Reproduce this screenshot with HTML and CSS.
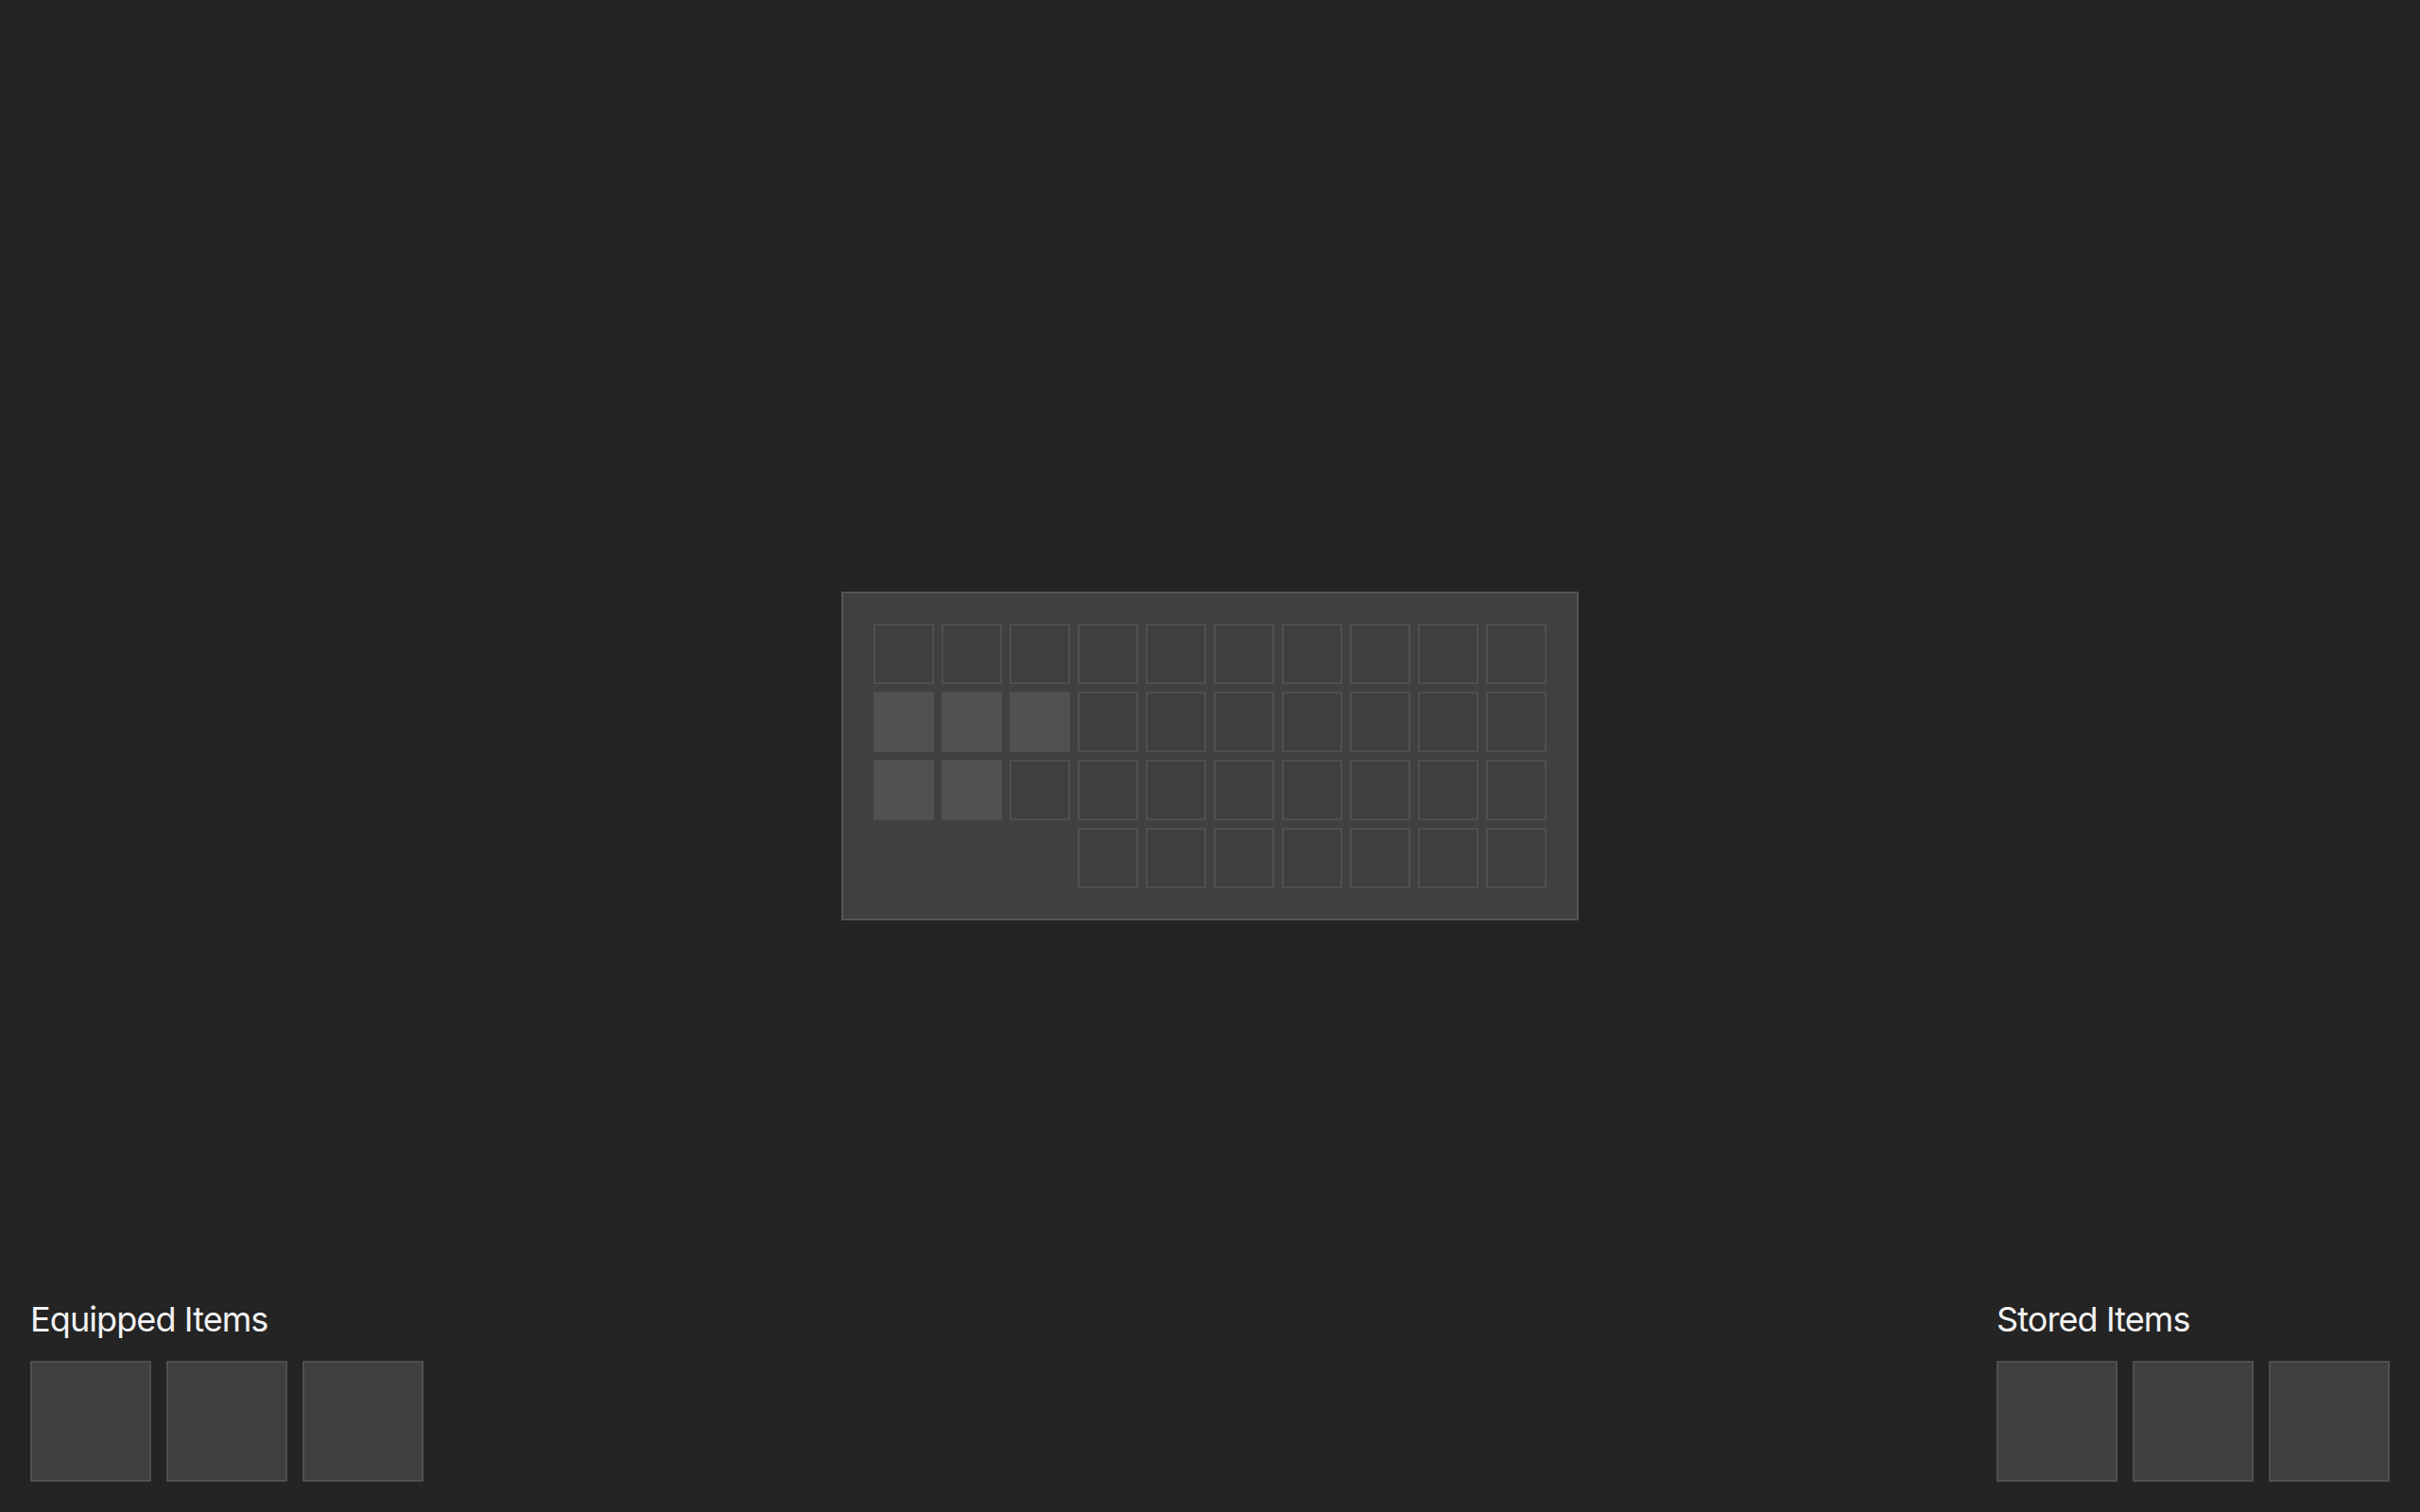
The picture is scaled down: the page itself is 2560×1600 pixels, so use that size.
FILE: index.html
```html
<!DOCTYPE html>
<html lang="en">
<head>
  <meta charset="UTF-8">
  <meta name="viewport" content="width=device-width, initial-scale=1.0">
  <title>Inventory</title>
  <link rel="stylesheet" href="styles.css">
</head>
<body>
  <div class="screen">
    <div class="spacer"></div>

    <div class="inventory">
      <div class="grid">
        <!-- row 1 -->
        <div class="cell"></div><div class="cell"></div><div class="cell"></div><div class="cell"></div><div class="cell"></div>
        <div class="cell"></div><div class="cell"></div><div class="cell"></div><div class="cell"></div><div class="cell"></div>
        <!-- row 2 -->
        <div class="cell filled"></div><div class="cell filled"></div><div class="cell filled"></div><div class="cell"></div><div class="cell"></div>
        <div class="cell"></div><div class="cell"></div><div class="cell"></div><div class="cell"></div><div class="cell"></div>
        <!-- row 3 -->
        <div class="cell filled"></div><div class="cell filled"></div><div class="cell"></div><div class="cell"></div><div class="cell"></div>
        <div class="cell"></div><div class="cell"></div><div class="cell"></div><div class="cell"></div><div class="cell"></div>
        <!-- row 4 -->
        <div class="cell blank"></div><div class="cell blank"></div><div class="cell blank"></div><div class="cell"></div><div class="cell"></div>
        <div class="cell"></div><div class="cell"></div><div class="cell"></div><div class="cell"></div><div class="cell"></div>
      </div>
    </div>

    <div class="footer">
      <div class="slots">
        <h2>Equipped Items</h2>
        <div class="slot-row">
          <div class="slot"></div>
          <div class="slot"></div>
          <div class="slot"></div>
        </div>
      </div>
      <div class="slots">
        <h2>Stored Items</h2>
        <div class="slot-row">
          <div class="slot"></div>
          <div class="slot"></div>
          <div class="slot"></div>
        </div>
      </div>
    </div>
  </div>
</body>
</html>
```

FILE: styles.css
```css
body {
  margin: 0;
  padding: 0;
  font-family: Inter, "Noto Sans", sans-serif;
  background-color: #242424;
  color: #f2f2f2;
}

/* three rows: equal top/bottom so the bag sits in the middle */
.screen {
  display: grid;
  grid-template-rows: 1fr auto 1fr;
  height: 100vh;
}

.inventory {
  justify-self: center;
  padding: 32px;
  background-color: #404040;
  border: 2px solid #555555;
}

.grid {
  display: grid;
  grid-template-columns: repeat(10, 64px);
  grid-auto-rows: 64px;
  gap: 8px;
}

.cell {
  box-sizing: border-box;
  border: 2px solid #4f4f4f;
  background-color: #3f3f3f;
}

.cell.filled {
  border-color: #515151;
  background-color: #515151;
}

.cell.blank {
  visibility: hidden;
}

.footer {
  align-self: end;
  display: flex;
  justify-content: space-between;
  padding: 32px;
}

.slots h2 {
  margin: 0 0 22px 0;
  font-size: 36px;
  font-weight: 400;
  line-height: 44px;
  letter-spacing: -0.9px;
}

.slot-row {
  display: flex;
  gap: 16px;
}

.slot {
  box-sizing: border-box;
  width: 128px;
  height: 128px;
  border: 2px solid #4f4f4f;
  background-color: #3f3f3f;
}
```
